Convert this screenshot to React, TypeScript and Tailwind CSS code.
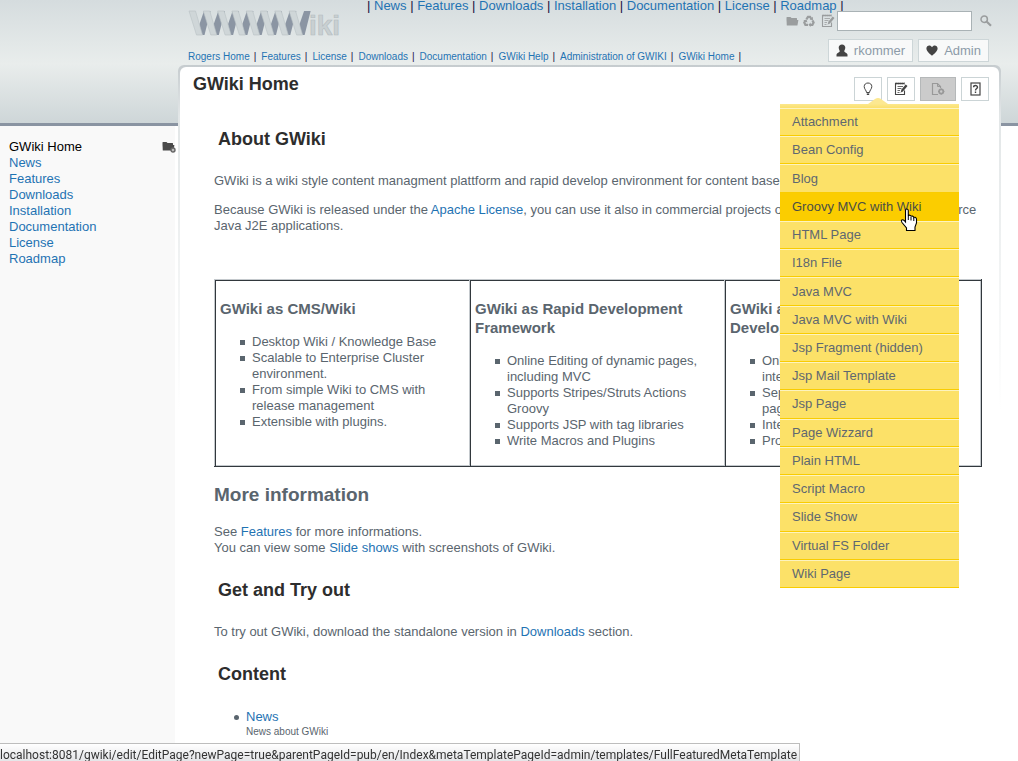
import React from "react";

const NAV = ["News", "Features", "Downloads", "Installation", "Documentation", "License", "Roadmap"];
const CRUMBS = ["Rogers Home", "Features", "License", "Downloads", "Documentation", "GWiki Help", "Administration of GWIKI", "GWiki Home"];
const PAGE_TYPES = [
  "Attachment", "Bean Config", "Blog", "Groovy MVC with Wiki", "HTML Page", "I18n File", "Java MVC",
  "Java MVC with Wiki", "Jsp Fragment (hidden)", "Jsp Mail Template", "Jsp Page", "Page Wizzard",
  "Plain HTML", "Script Macro", "Slide Show", "Virtual FS Folder", "Wiki Page",
];
const COLUMNS = [
  {
    title: "GWiki as CMS/Wiki",
    items: ["Desktop Wiki / Knowledge Base", "Scalable to Enterprise Cluster environment.", "From simple Wiki to CMS with release management", "Extensible with plugins."],
  },
  {
    title: "GWiki as Rapid Development Framework",
    items: ["Online Editing of dynamic pages, including MVC", "Supports Stripes/Struts Actions Groovy", "Supports JSP with tag libraries", "Write Macros and Plugins"],
  },
  {
    title: "GWiki as Web Application Development",
    items: ["Online help and documentation integrated", "Separate layout and logic in wiki pages", "Integrated search", "Provides user and role permission"],
  },
];

function Link({ children }: { children: React.ReactNode }) {
  return <a href="#" className="text-[#1f73b3]">{children}</a>;
}

function Logo() {
  return (
    <svg width="152" height="27" viewBox="0 0 152 27" role="img" aria-label="WWWWiki">
      {[0, 1, 2, 3, 4, 5, 6, 7].map((i) => (
        <path key={i} d={`M${12 + i * 14.3} 25L${11.5 + i * 14.3} 14L${16 + i * 14.3} 1H${22.5 + i * 14.3}L${16.5 + i * 14.3} 25Z`} fill="#8b95a3" />
      ))}
      {[0, 1, 2, 3, 4, 5, 6, 7].map((i) => (
        <path key={i} d={`M${1 + i * 14.3} 1H${7.5 + i * 14.3}L${14.5 + i * 14.3} 25H${8.5 + i * 14.3}Z`} fill="#cfd6d8" stroke="#b9c1c4" strokeWidth="0.6" />
      ))}
      <text x="121" y="25" fontFamily="Liberation Sans" fontWeight="700" fontSize="28" fill="#c9d0d2" stroke="#b4bcbf" strokeWidth="0.6">iki</text>
    </svg>
  );
}

function Folder({ className }: { className: string }) {
  return (
    <svg width="13" height="11" viewBox="0 0 13 11" className={className} fill="currentColor">
      <path d="M0.5 9V1.5Q0.5 1 1 1H4.5L5.5 2H10.5Q11 2 11 2.5V4H0.5Z" />
      <path d="M0.5 4H12.4L11.4 9.4H0.8Z" />
    </svg>
  );
}

function NoteEdit() {
  return (
    <svg width="14" height="14" viewBox="0 0 14 14" fill="none" stroke="currentColor">
      <path d="M10.5 8.5V12.5H1.5V1.5H10" strokeWidth="1.1" />
      <path d="M1.5 1.6H11" strokeWidth="2" strokeDasharray="1.2 0.8" />
      <path d="M3.5 4.5H9M3.5 6.5H7.5M3.5 8.5H6M3.5 10.5H5.5" strokeWidth="0.8" />
      <path d="M12.6 3.2L7.8 9" strokeWidth="2.4" />
      <path d="M7.6 8.3L6.4 10.8L8.8 9.6Z" fill="currentColor" stroke="none" />
    </svg>
  );
}

function Recycle() {
  return (
    <svg width="12" height="12" viewBox="0 0 12 12" fill="none" stroke="currentColor" strokeWidth="2.2">
      <path d="M3.4 4.4L5 1.8H7L8.2 3.8" />
      <path d="M9.4 5.4L10.6 7.6L9.4 9.8H7" />
      <path d="M5 9.8H2.4L1.3 7.6L2.4 5.8" />
      <path d="M6.6 4.8L10 5L9.8 1.8ZM7.6 7.4V12L5.4 9.8ZM0.2 5.6L3.6 4.6L4.4 7.6Z" fill="currentColor" stroke="none" />
    </svg>
  );
}

function HandPointer() {
  return (
    <svg width="18" height="24" viewBox="0 0 18 24" className="pointer-events-none absolute left-[120px] top-[14px]">
      <path
        d="M5.5 14V2.5Q5.5 1 6.8 1T8.3 2.5V8Q8.6 7 9.8 7.2T11 8.6Q11.4 7.8 12.5 8.1T13.8 9.6Q14.3 9 15.2 9.3T16.5 10.8V15L15 19V22.5H6.5V20L2 14.5Q0.8 12.8 1.8 12T4.2 12.5Z"
        fill="#fff" stroke="#000" strokeWidth="1.1"
      />
      <path d="M8.3 8V12M11 9V12.5M13.8 10V13" stroke="#000" />
    </svg>
  );
}

function NewPageMenu() {
  return (
    <div className="absolute right-[30px] top-[21px] z-10 w-[179px]">
      <svg width="20" height="6" viewBox="0 0 20 6" className="ml-[88px] block">
        <path d="M0 6L7 1Q10 -1 13 1L20 6Z" fill="#fce891" />
      </svg>
      <div className="h-1 bg-linear-to-b from-[#fce88d] to-[#fbe06c]" />
      <ul className="flex h-[480px] flex-col">
        {PAGE_TYPES.map((t) => {
          const active = t === "Groovy MVC with Wiki";
          return (
            <li key={t} className={`relative flex flex-1 border-t border-b border-b-[#f9cc00] ${active ? "z-10 border-t-[#fbcd00] bg-[#fbcd00] text-[#4a4d45]" : "border-t-[#fdf3be] bg-[#fce168] text-[#5f6870]"}`}>
              <a href="#" className="flex flex-1 items-center pl-3">{t}</a>
              {active && <HandPointer />}
            </li>
          );
        })}
      </ul>
    </div>
  );
}

const tool = "flex h-6 w-7 items-center justify-center border border-[#cbd4d6] bg-white text-[#444]";
const account = "flex h-[23px] items-center border border-[#cdd6d8] bg-[#f8f9f9] px-[7px] text-[#8c9ba8]";
const section = "pl-1 text-[18px] leading-6 font-bold text-[#2d2d2d]";

export default function App() {
  return (
    <div className="flex min-h-screen overflow-hidden bg-white bg-[linear-gradient(#8a94a2,#8a94a2),linear-gradient(#d5dcde,#e9edec_64px,#ced6d8_123px)] bg-[length:100%_3px,100%_123px] bg-[position:0_123px,0_0] bg-no-repeat font-['Liberation_Sans',Arial,sans-serif] text-[13px] leading-4 text-[#5a656e]">
      <aside className="flex w-[178px] shrink-0 flex-col pt-[126px] pr-[3px]">
        <nav className="flex flex-1 justify-between bg-[#f9f9f9] pt-[13px] pl-[9px]">
          <ul>
            <li><a href="#" className="text-black">GWiki Home</a></li>
            {NAV.map((n) => <li key={n}><Link>{n}</Link></li>)}
          </ul>
          <button type="button" aria-label="Folder options" className="relative mt-[2px] h-[11px] w-[13px] text-[#4a4a4a]">
            <Folder className="block" />
            <svg width="6" height="6" viewBox="0 0 6 6" className="absolute -right-px -bottom-px">
              <circle cx="3" cy="3" r="2" fill="#bbb" stroke="#666" strokeWidth="1.4" />
            </svg>
          </button>
        </nav>
      </aside>

      <div className="mr-[17px] flex min-w-0 flex-1 flex-col">
        <header className="h-[65px] pl-[10px]">
          <nav className="h-[10px] pl-[179px] leading-3 whitespace-nowrap text-[#201040]">
            | {NAV.map((n) => <React.Fragment key={n}><Link>{n}</Link> | </React.Fragment>)}
          </nav>
          <div className="flex justify-between">
            <div>
              <Logo />
              <nav className="mt-[14px] flex gap-[5px] text-[10px] leading-3 whitespace-nowrap text-[#201040]">
                {CRUMBS.map((c) => <span key={c} className="flex gap-1"><Link>{c}</Link><span>|</span></span>)}
              </nav>
            </div>
            <div className="flex flex-col items-end">
              <form className="mt-px flex items-center pr-[9px] text-[#9a9d9e]">
                <button type="button" aria-label="Folder"><Folder className="block" /></button>
                <button type="button" aria-label="Recycle" className="ml-1"><Recycle /></button>
                <button type="button" aria-label="Edit" className="ml-[6px]"><NoteEdit /></button>
                <input aria-label="Search" type="text" className="ml-[2px] h-5 w-[135px] border border-[#a9b2b5] bg-white px-1 outline-none" />
                <button type="submit" aria-label="Search" className="ml-2">
                  <svg width="12" height="12" viewBox="0 0 12 12" fill="none" stroke="currentColor">
                    <circle cx="4.2" cy="4.2" r="3.2" strokeWidth="1.5" />
                    <path d="M6.8 6.8L11 10.8" strokeWidth="2.2" />
                  </svg>
                </button>
              </form>
              <div className="mt-2 flex gap-[5px] pr-3">
                <button type="button" className={account}>
                  <svg width="12" height="13" viewBox="0 0 12 13" fill="#444" className="mr-[6px]">
                    <path d="M6 0.5C8 0.5 9.4 1.8 9.3 3.8C9.2 5.4 8.4 6.2 8.2 7.2C8.3 8.4 11.3 8.8 11.5 10.4V12.5H0.5V10.4C0.7 8.8 3.7 8.4 3.8 7.2C3.6 6.2 2.8 5.4 2.7 3.8C2.6 1.8 4 0.5 6 0.5Z" />
                  </svg>
                  rkommer
                </button>
                <button type="button" className={account}>
                  <svg width="12" height="11" viewBox="0 0 12 11" fill="#444" className="mr-[6px]">
                    <path d="M6 10.8C4 8.6 0.4 6.4 0.4 3.4C0.4 0.4 4.4 -0.6 6 2.2C7.6 -0.6 11.6 0.4 11.6 3.4C11.6 6.4 8 8.6 6 10.8Z" />
                  </svg>
                  Admin
                </button>
              </div>
            </div>
          </div>
        </header>

        <div className="flex-1 rounded-t-md bg-[linear-gradient(#c6cccf,#e2e6e7_50px,#fff_345px)] px-[2px] pt-[2px]">
          <main className="h-full rounded-t-md bg-white pr-[17px] pl-[34px]">
            <div className="relative -mr-2 -ml-[21px] flex items-start justify-between pt-2 pr-px">
              <h1 className="text-[18px] leading-[18px] font-bold text-[#2d2d2d]">GWiki Home</h1>
              <div className="relative mt-[2px] flex gap-[5px]">
                <button type="button" aria-label="Hints" className={tool}>
                  <svg width="10" height="14" viewBox="0 0 10 14" fill="none" stroke="currentColor">
                    <path d="M3.5 10.5C3.5 8.5 1.2 7 1.2 4.6C1.2 2.4 2.8 1 5 1S8.8 2.4 8.8 4.6C8.8 7 6.5 8.5 6.5 10.5Z" />
                    <path d="M3.8 12.2H6.2" strokeWidth="1.6" />
                  </svg>
                </button>
                <button type="button" aria-label="Edit page" className={tool}><NoteEdit /></button>
                <button type="button" aria-label="New page" className="flex h-6 w-9 items-center justify-center border border-[#b5b8b9] bg-[#cbcbcb] text-[#999]">
                  <svg width="14" height="14" viewBox="0 0 14 14" fill="none" stroke="currentColor">
                    <path d="M7 12.5H1.5V1.5H6.5L9.5 4.5V6" strokeWidth="1.2" />
                    <path d="M6.5 1.5V4.5H9.5" />
                    <circle cx="10.2" cy="9.5" r="2.1" strokeWidth="1.8" />
                    <path d="M10.2 6.3V12.7M7 9.5H13.4" strokeDasharray="1 4.4" />
                  </svg>
                </button>
                <button type="button" aria-label="Help" className={tool}>
                  <svg width="11" height="14" viewBox="0 0 11 14" fill="none" stroke="currentColor">
                    <rect x="1" y="1" width="9" height="12" strokeWidth="1.2" />
                    <path d="M3.6 5.2C3.6 3 7.5 3 7.5 5.2C7.5 6.6 5.5 6.6 5.5 8.4M5.5 9.6V11" strokeWidth="1.4" />
                  </svg>
                </button>
                <NewPageMenu />
              </div>
            </div>

            <h2 className={`mt-[26px] ${section}`}>About GWiki</h2>
            <p className="mt-[22px]">GWiki is a wiki style content managment plattform and rapid develop environment for content based applications.</p>
            <p className="mt-[13px]">Because GWiki is released under the <Link>Apache License</Link>, you can use it also in commercial projects or extend it for use in Open Source Java J2E applications.</p>

            <table className="mt-[45px] w-full table-fixed border-separate border-spacing-0 border-r border-b border-[#32383d] shadow-[inset_-1px_-1px_0_#c4c9cd]">
              <colgroup>
                <col className="w-[255px]" />
                <col className="w-[255px]" />
                <col />
              </colgroup>
              <tbody>
                <tr>
                  {COLUMNS.map((c) => (
                    <td key={c.title} className="border-t border-l border-[#c4c9cd] pt-[19px] pr-1 pb-[17px] pl-[5px] align-top shadow-[inset_1px_1px_0_#32383d]">
                      <h3 className="text-[15px] leading-[19px] font-bold">{c.title}</h3>
                      <ul className="mt-4 pl-8">
                        {c.items.map((i) => (
                          <li key={i} className="relative before:absolute before:top-[6px] before:-left-3 before:size-[5px] before:bg-[#5a656e]">{i}</li>
                        ))}
                      </ul>
                    </td>
                  ))}
                </tr>
              </tbody>
            </table>

            <h2 className="mt-4 text-[19px] leading-6 font-bold">More information</h2>
            <p className="mt-[17px]">See <Link>Features</Link> for more informations.<br />You can view some <Link>Slide shows</Link> with screenshots of GWiki.</p>
            <h2 className={`mt-[22px] ${section}`}>Get and Try out</h2>
            <p className="mt-[22px]">To try out GWiki, download the standalone version in <Link>Downloads</Link> section.</p>
            <h2 className={`mt-[22px] ${section}`}>Content</h2>
            <ul className="mt-[23px] pl-8">
              <li className="relative before:absolute before:top-[6px] before:-left-3 before:size-[5px] before:rounded-full before:bg-[#5a656e]">
                <Link>News</Link>
                <div className="text-[10px] leading-[14px]">News about GWiki</div>
              </li>
            </ul>
          </main>
        </div>
      </div>

      <div className="fixed bottom-0 left-0 z-20 h-[18px] border-t border-r border-[#bdbdbd] bg-linear-to-b from-white to-[#e4e5e8] pr-[2px] font-['Roboto','Noto_Sans',sans-serif] text-[12px] leading-[22px] whitespace-nowrap text-[#333]">
        localhost:8081/gwiki/edit/EditPage?newPage=true&amp;parentPageId=pub/en/Index&amp;metaTemplatePageId=admin/templates/FullFeaturedMetaTemplate
      </div>
    </div>
  );
}
